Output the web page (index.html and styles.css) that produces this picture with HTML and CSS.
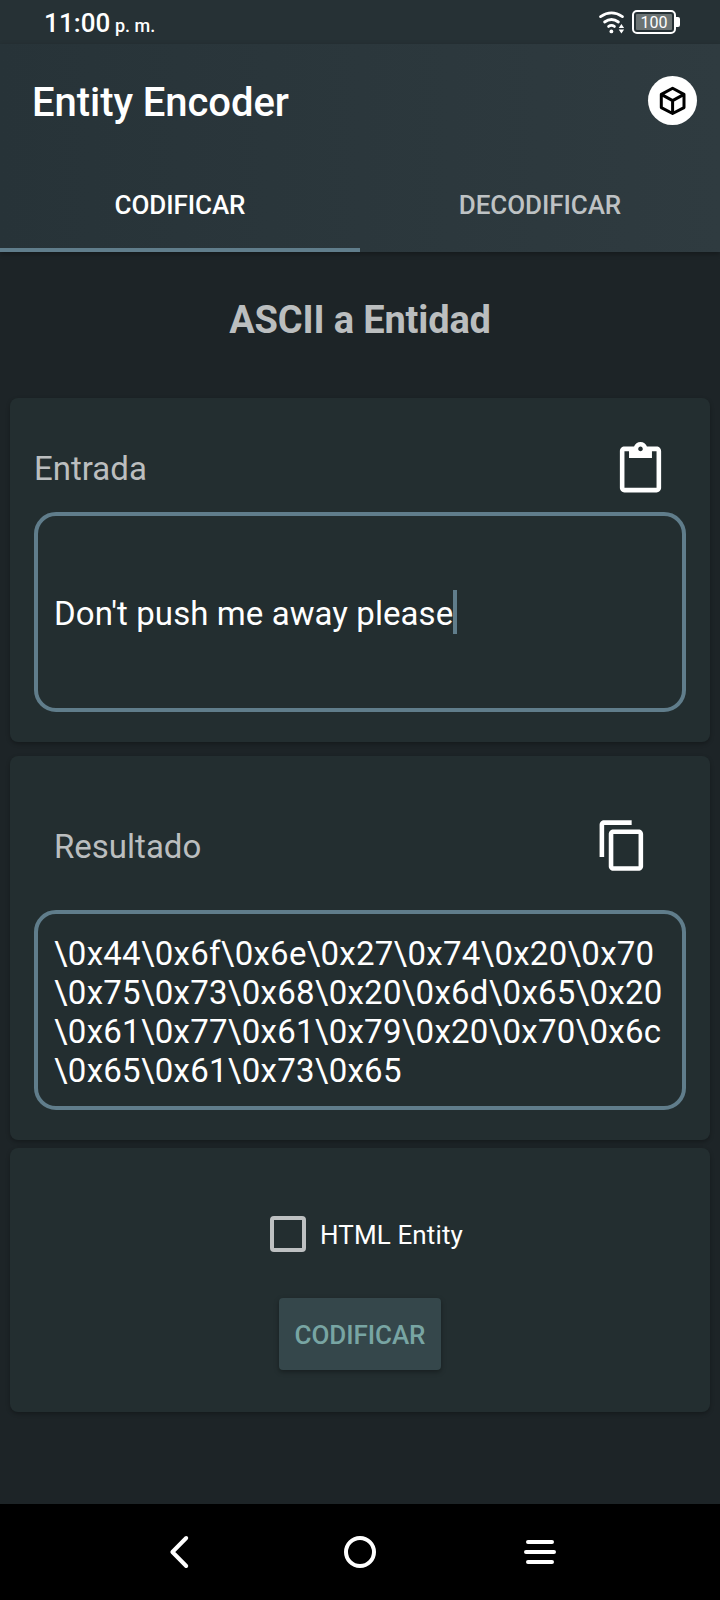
FILE: index.html
```html
<!DOCTYPE html>
<html lang="es">
<head>
<meta charset="utf-8">
<title>Entity Encoder</title>
<link rel="stylesheet" href="styles.css">
</head>
<body>
<div class="status">
  <div class="clock">11:00<span class="ampm">p. m.</span></div>
  <div class="indicators">
    <svg class="wifi" width="28" height="26" viewBox="0 0 28 26" fill="none" stroke="#fff" stroke-width="2.8" stroke-linecap="round">
      <path d="M2.6 6.6Q13.5-.8 24.4 6.6"/>
      <path d="M6.6 12Q13.5 7 20.4 12"/>
      <path d="M10.6 16.4Q13.5 14.4 16.4 16.4"/>
      <circle cx="13.4" cy="21.4" r="1.9" fill="#fff" stroke="none"/>
      <path d="M23.4 14l2.7 4h-5.4zM23.4 23.6l2.7-4h-5.4z" fill="#fff" stroke="none"/>
    </svg>
    <div class="battery"><div class="charge">100</div></div>
    <div class="nub"></div>
  </div>
</div>
<header class="header">
  <div class="toolbar">
    <h1 class="title">Entity Encoder</h1>
    <div class="badge">
      <svg width="49" height="49" viewBox="0 0 49 49" fill="none" stroke="#000" stroke-width="3" stroke-linejoin="round">
        <path d="M24.6 12.3L36 18.4V31.6L24.6 37.5L13.3 31.6V18.4ZM13.3 18.4L24.6 24.6L36 18.4M24.6 24.6V37.5"/>
      </svg>
    </div>
  </div>
  <nav class="tabs">
    <div class="tab active">CODIFICAR</div>
    <div class="tab">DECODIFICAR</div>
  </nav>
</header>
<main class="main">
  <h2 class="heading">ASCII a Entidad</h2>
  <section class="card input-card">
    <div class="row">
      <span class="label">Entrada</span>
      <svg class="paste" width="55" height="55" viewBox="0 0 24 24" fill="#fff"><path d="M19 2h-4.18C14.4.84 13.3 0 12 0S9.6.84 9.18 2H5c-1.1 0-2 .9-2 2v16c0 1.1.9 2 2 2h14c1.1 0 2-.9 2-2V4c0-1.1-.9-2-2-2zm-7 0c.55 0 1 .45 1 1s-.45 1-1 1-1-.45-1-1 .45-1 1-1zm7 18H5V4h2v3h10V4h2v16z"/></svg>
    </div>
    <div class="box"><div class="entry">Don't push me away please<span class="caret"></span></div></div>
  </section>
  <section class="card result-card">
    <div class="row result-row">
      <span class="label">Resultado</span>
      <svg class="copy" width="55" height="55" viewBox="0 0 24 24" fill="#fff"><path d="M16 1H4c-1.1 0-2 .9-2 2v14h2V3h12V1zm3 4H8c-1.1 0-2 .9-2 2v14c0 1.1.9 2 2 2h11c1.1 0 2-.9 2-2V7c0-1.1-.9-2-2-2zm0 16H8V7h11v14z"/></svg>
    </div>
    <div class="box"><div class="output">\0x44\0x6f\0x6e\0x27\0x74\0x20\0x70<br>\0x75\0x73\0x68\0x20\0x6d\0x65\0x20<br>\0x61\0x77\0x61\0x79\0x20\0x70\0x6c<br>\0x65\0x61\0x73\0x65</div></div>
  </section>
  <section class="card action-card">
    <div class="option"><span class="checkbox"></span><span class="option-label">HTML Entity</span></div>
    <div class="button">CODIFICAR</div>
  </section>
</main>
<footer class="navbar">
  <svg width="180" height="96" viewBox="0 0 180 96" fill="none" stroke="#fff" stroke-width="4" stroke-linecap="round" stroke-linejoin="round"><path d="M96.2 34L82.4 48L96.2 62"/></svg>
  <svg width="180" height="96" viewBox="0 0 180 96" fill="none" stroke="#fff" stroke-width="4"><circle cx="90" cy="48" r="14"/></svg>
  <svg width="180" height="96" viewBox="0 0 180 96" fill="none" stroke="#fff" stroke-width="4" stroke-linecap="round"><path d="M78 38H102M76 48H104M78 58H102"/></svg>
</footer>
</body>
</html>
```
FILE: styles.css
```css
* { box-sizing: border-box; }
body {
  margin: 0;
  width: 720px;
  height: 1600px;
  display: flex;
  flex-direction: column;
  background: #1d2427;
  color: #fff;
  font-family: Roboto, sans-serif;
  overflow: hidden;
}
svg { display: block; }
.status {
  height: 44px;
  flex: none;
  display: flex;
  justify-content: space-between;
  background: #263135;
  padding: 0 40px 0 44px;
}
.clock {
  font-size: 26px;
  font-weight: 500;
  line-height: 46px;
  letter-spacing: .1px;
  white-space: nowrap;
}
.ampm { font-size: 18px; margin-left: 4.5px; letter-spacing: 0; }
.indicators { display: flex; padding-top: 10px; }
.wifi { margin-right: 6.5px; }
.battery {
  width: 44px;
  height: 24px;
  border: 2px solid #fff;
  border-radius: 5px;
  padding: 2px;
}
.charge {
  height: 16px;
  border-radius: 1px;
  background: #6b7373;
  font-size: 16px;
  line-height: 17px;
  text-align: center;
}
.nub {
  width: 4px;
  height: 10px;
  margin-top: 7px;
  background: #fff;
  border-radius: 0 2px 2px 0;
}
.header {
  height: 208px;
  flex: none;
  background: linear-gradient(90deg, #273338, #2f3b40);
  box-shadow: 0 2px 5px rgba(0, 0, 0, .3);
}
.toolbar {
  height: 112px;
  display: flex;
  align-items: center;
  justify-content: space-between;
  padding: 0 23px 0 32px;
}
.title { margin: 6px 0 0; font-size: 40px; font-weight: 500; line-height: 48px; letter-spacing: -.06px; }
.badge { width: 49px; height: 49px; border-radius: 50%; background: #fff; }
.tabs { display: flex; height: 96px; }
.tab {
  flex: 1;
  border-bottom: 4px solid transparent;
  padding-top: 34px;
  text-align: center;
  font-size: 26px;
  font-weight: 500;
  line-height: 30px;
  letter-spacing: -.08px;
  color: #bec2c4;
}
.tab.active { color: #fff; border-color: #607d8b; }
.main { flex: 1; padding: 0 10px; }
.heading {
  margin: 0;
  padding: 44px 0 0;
  height: 146px;
  font-size: 38px;
  font-weight: 700;
  line-height: 48px;
  letter-spacing: -.15px;
  text-align: center;
  color: #bbbebf;
}
.card {
  width: 700px;
  border-radius: 8px;
  background: #232e30;
  box-shadow: 0 2px 4px rgba(0, 0, 0, .28);
  padding: 0 24px;
}
.input-card { height: 344px; margin-bottom: 14px; }
.result-card { height: 384px; margin-bottom: 8px; }
.action-card {
  height: 264px;
  padding: 68px 0 0;
  display: flex;
  flex-direction: column;
  align-items: center;
}
.row {
  height: 114px;
  padding: 44px 18px 0 0;
  display: flex;
  justify-content: space-between;
}
.result-row { height: 154px; padding: 61.5px 36.5px 0 20px; }
.label { font-size: 33px; line-height: 39px; padding-top: 7px; color: #bbbebf; }
.result-row .label { padding-top: 9.5px; }
.box {
  width: 652px;
  height: 200px;
  border: 4px solid #607d8b;
  border-radius: 22px;
  padding: 0 16px;
  display: flex;
  align-items: center;
}
.entry, .output { font-size: 33px; line-height: 39px; white-space: nowrap; }
.entry { display: flex; align-items: flex-end; letter-spacing: .08px; line-height: 44px; height: 44px; padding-top: 2px; }
.caret { width: 4px; height: 44px; margin-bottom: 0; background: #607d8b; }
.entry { line-height: 40px; padding-top: 0; }
.output { letter-spacing: .275px; padding-top: 4px; }
.option { display: flex; align-items: center; height: 36px; margin-left: 13px; }
.checkbox { width: 36px; height: 36px; border: 4px solid #bdc0c1; border-radius: 4px; margin-right: 14px; }
.option-label { font-size: 26px; line-height: 30px; letter-spacing: .13px; padding-top: 2px; }
.button {
  width: 162px;
  height: 72px;
  margin-top: 46px;
  border-radius: 4px;
  background: #35474b;
  box-shadow: 0 2px 5px rgba(0, 0, 0, .35);
  color: #78a5a3;
  font-size: 26px;
  font-weight: 500;
  line-height: 74px;
  letter-spacing: -.08px;
  text-align: center;
}
.navbar { height: 96px; flex: none; display: flex; justify-content: center; background: #000; }
```
